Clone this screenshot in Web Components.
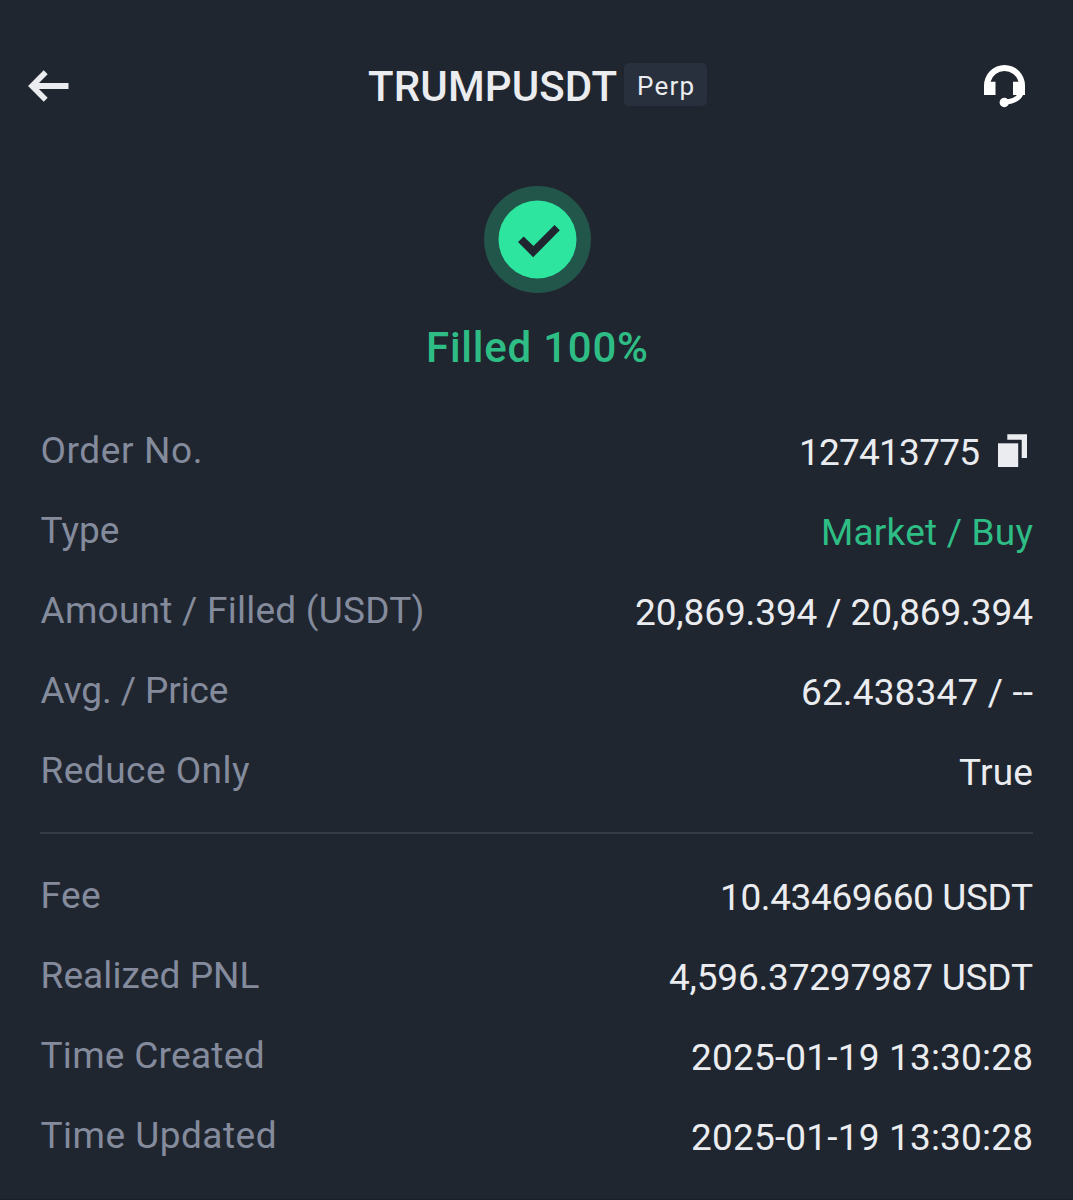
<!DOCTYPE html>
<html lang="en">
<head>
<meta charset="utf-8">
<title>Order Details</title>
<style>
  html, body {
    margin: 0;
    background: #202630;
  }

  body {
    font-family: Roboto, "Liberation Sans", sans-serif;
    color: #eaecef;
    overflow: hidden;
  }
</style>
</head>
<body>
<order-details>
  <page-header slot="header" pair="TRUMPUSDT" tag="Perp"></page-header>
  <order-status slot="header">Filled 100%</order-status>

  <detail-group>
    <detail-row label="Order No." label-width="162" value="127413775" value-width="181" copy></detail-row>
    <detail-row label="Type" label-width="79" value="Market / Buy" value-width="212" tone="buy"></detail-row>
    <detail-row label="Amount / Filled (USDT)" label-width="384" value="20,869.394 / 20,869.394" value-width="398"></detail-row>
    <detail-row label="Avg. / Price" label-width="188" value="62.438347 / --" value-width="232"></detail-row>
    <detail-row label="Reduce Only" label-width="209" value="True" value-width="74"></detail-row>
  </detail-group>

  <detail-group>
    <detail-row label="Fee" label-width="60" value="10.43469660 USDT" value-width="313"></detail-row>
    <detail-row label="Realized PNL" label-width="219" value="4,596.37297987 USDT" value-width="364"></detail-row>
    <detail-row label="Time Created" label-width="224" value="2025-01-19 13:30:28" value-width="342"></detail-row>
    <detail-row label="Time Updated" label-width="236" value="2025-01-19 13:30:28" value-width="342"></detail-row>
  </detail-group>
</order-details>

<script>
// Text tracked out (or in) so that the line takes exactly `width` pixels
class TrackedText extends HTMLElement {
  constructor() {
    super();
    this.attachShadow({ mode: "open" });
    this.shadowRoot.innerHTML = `
      <style>
        :host {
          display: inline-block;
          white-space: nowrap;
        }

        span {
          display: inline-block;
        }
      </style>
      <span></span>
    `;
  }

  connectedCallback() {
    const span = this.shadowRoot.querySelector("span");
    const text = this.getAttribute("text");
    span.textContent = text;

    const width = parseFloat(this.getAttribute("width"));
    const natural = span.getBoundingClientRect().width;
    const spacing = (width - natural) / (text.length - 1);

    span.style.letterSpacing = `${spacing}px`;
    span.style.marginRight = `${-spacing}px`;
  }
}

class OrderDetails extends HTMLElement {
  constructor() {
    super();
    this.attachShadow({ mode: "open" });
    this.shadowRoot.innerHTML = `
      <style>
        :host {
          display: flex;
          flex-direction: column;
          box-sizing: border-box;
          width: 1073px;
          height: 1200px;
          border-bottom: 1px solid #1b1e27;
        }

        main {
          padding: 0 40px;
        }
      </style>
      <slot name="header"></slot>
      <main><slot></slot></main>
    `;
  }
}

class PageHeader extends HTMLElement {
  constructor() {
    super();
    this.attachShadow({ mode: "open" });
  }

  connectedCallback() {
    this.shadowRoot.innerHTML = `
      <style>
        :host {
          display: grid;
          grid-template-columns: 1fr auto 1fr;
          align-items: center;
          height: 172px;
          padding: 0 48px 0 28px;
        }

        svg {
          display: block;
        }

        .title {
          display: flex;
          align-items: center;
          gap: 7px;
          margin-left: 22px;
        }

        .pair {
          padding-top: 1px;
          font-size: 42px;
          font-weight: 500;
          line-height: 50px;
        }

        .tag {
          box-sizing: border-box;
          height: 43px;
          margin-bottom: 3px;
          padding: 0 13px;
          border-radius: 5px;
          background: #29303d;
          font-size: 26px;
          line-height: 47px;
        }

        .support {
          justify-self: end;
          margin-bottom: 1px;
        }
      </style>
      <svg width="42" height="32" viewBox="0 0 42 32" fill="none" stroke="#eaecef">
        <path d="M40.500 16H4" stroke-width="6"/>
        <path d="M17.700 2.200L4 16l13.700 13.800" stroke-width="5.600"/>
      </svg>
      <div class="title">
        <tracked-text class="pair" text="${this.getAttribute("pair")}" width="249"></tracked-text>
        <div class="tag"><tracked-text text="${this.getAttribute("tag")}" width="57"></tracked-text></div>
      </div>
      <svg class="support" width="43" height="44" viewBox="0 0 43 44">
        <path fill="#fff" d="M2 31V21.500a20.500 20.500 0 0 1 41 0V31H31V17.800H36.500a14.500 14.500 0 0 0-28 0H13.500V31z"/>
        <path d="M39 29.500q-3.500 8-17 8.800" fill="none" stroke="#fff" stroke-width="5"/>
        <circle cx="22.300" cy="38.500" r="4.700" fill="#fff"/>
      </svg>
    `;
  }
}

class OrderStatus extends HTMLElement {
  constructor() {
    super();
    this.attachShadow({ mode: "open" });
    this.shadowRoot.innerHTML = `
      <style>
        :host {
          display: flex;
          flex-direction: column;
          align-items: center;
          height: 225px;
          padding: 14px 0 0 1px;
          color: #2ebd85;
        }

        svg {
          display: block;
          margin-bottom: 30px;
        }

        .text {
          font-size: 42px;
          font-weight: 500;
          line-height: 50px;
        }
      </style>
      <svg width="107" height="107" viewBox="0 0 107 107">
        <circle cx="53.500" cy="53.500" r="53.500" fill="#23564a"/>
        <circle cx="53.500" cy="53.500" r="39" fill="#2ee5a0"/>
        <path d="M34 56l5.700-5.400 9.800 9.500 21-21.100 5.300 5.300L49.200 71.200z" fill="#202630"/>
      </svg>
    `;
  }

  connectedCallback() {
    const text = document.createElement("tracked-text");
    text.className = "text";
    text.setAttribute("text", this.textContent.trim());
    text.setAttribute("width", "222");
    this.shadowRoot.appendChild(text);
  }
}

class DetailGroup extends HTMLElement {
  constructor() {
    super();
    this.attachShadow({ mode: "open" });
    this.shadowRoot.innerHTML = `
      <style>
        :host {
          display: flex;
          flex-direction: column;
        }

        :host(:not(:last-child)) {
          padding-bottom: 21px;
          margin-bottom: 22px;
          border-bottom: 2px solid #333b47;
        }
      </style>
      <slot></slot>
    `;
  }
}

class DetailRow extends HTMLElement {
  constructor() {
    super();
    this.attachShadow({ mode: "open" });
  }

  get copyIcon() {
    return `
      <svg width="30" height="34" viewBox="0 0 30 34" fill="#eaecef">
        <path d="M0 9.300h20.200V33H0z"/>
        <path d="M9.300 .300H29v23.700h-5.300V5.800H9.300z"/>
      </svg>
    `;
  }

  connectedCallback() {
    this.shadowRoot.innerHTML = `
      <style>
        :host {
          display: flex;
          align-items: center;
          justify-content: space-between;
          height: 80px;
          font-size: 37px;
          line-height: 44px;
        }

        .label {
          margin: 0 0 1px 0.500px;
          color: #848b9c;
        }

        .value {
          display: flex;
          align-items: center;
          margin-top: 3px;
        }

        :host([tone="buy"]) .value {
          color: #2ebd85;
        }

        svg {
          margin: 0 5px 4px 18px;
        }
      </style>
      <tracked-text class="label" text="${this.getAttribute("label")}" width="${this.getAttribute("label-width")}"></tracked-text>
      <div class="value">
        <tracked-text text="${this.getAttribute("value")}" width="${this.getAttribute("value-width")}"></tracked-text>
        ${this.hasAttribute("copy") ? this.copyIcon : ""}
      </div>
    `;
  }
}

// tracked-text measures itself, so the containers that style it come first
window.customElements.define("order-details", OrderDetails);
window.customElements.define("page-header", PageHeader);
window.customElements.define("order-status", OrderStatus);
window.customElements.define("detail-group", DetailGroup);
window.customElements.define("detail-row", DetailRow);
window.customElements.define("tracked-text", TrackedText);
</script>
</body>
</html>
